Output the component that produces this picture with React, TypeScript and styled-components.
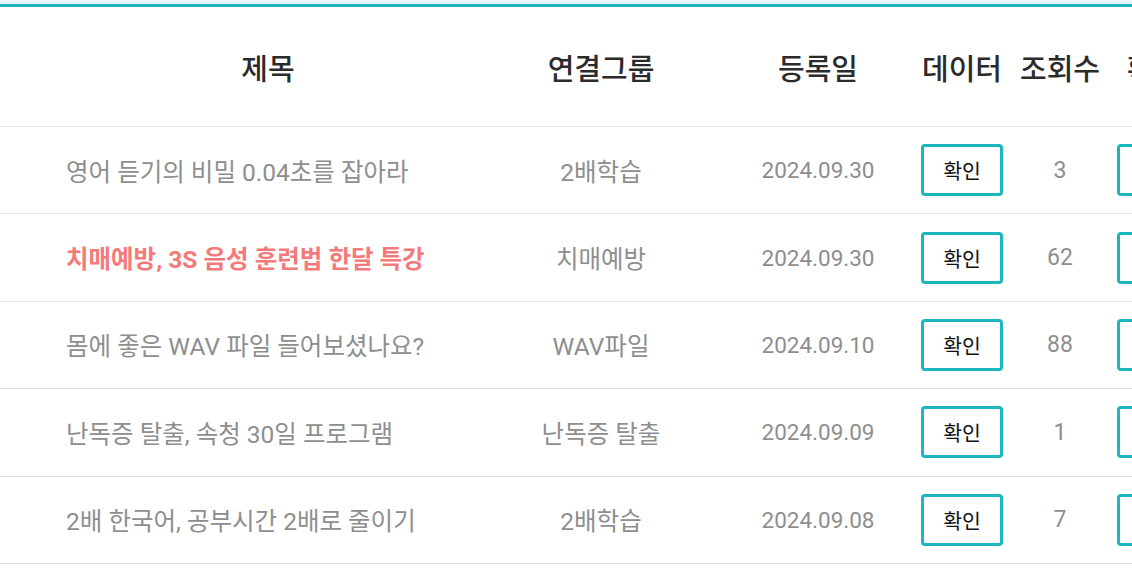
import styled, { createGlobalStyle } from "styled-components";

interface PostType {
  id: number;
  title: string;
  group: string;
  date: string;
  views: number;
  highlight?: boolean;
}

const posts: PostType[] = [
  { id: 1, title: "영어 듣기의 비밀 0.04초를 잡아라", group: "2배학습", date: "2024.09.30", views: 3 },
  { id: 2, title: "치매예방, 3S 음성 훈련법 한달 특강", group: "치매예방", date: "2024.09.30", views: 62, highlight: true },
  { id: 3, title: "몸에 좋은 WAV 파일 들어보셨나요?", group: "WAV파일", date: "2024.09.10", views: 88 },
  { id: 4, title: "난독증 탈출, 속청 30일 프로그램", group: "난독증 탈출", date: "2024.09.09", views: 1 },
  { id: 5, title: "2배 한국어, 공부시간 2배로 줄이기", group: "2배학습", date: "2024.09.08", views: 7 },
];

const GlobalStyle = createGlobalStyle`
  body {
    margin: 0;
    background: #fff;
    overflow: hidden;
    font-family: Roboto, "Noto Sans CJK KR", sans-serif;
  }
`;

const Page = styled.div`
  width: 1132px;
  height: 588px;
  overflow: hidden;
  border-top: 4px solid #e3f7f8;
`;

const Table = styled.div`
  width: 1207px;
  border-top: 3px solid #1db5bd;
`;

const Row = styled.div<{ $head?: boolean }>`
  display: grid;
  grid-template-columns: 479px 244px 190px 98px 98px 98px;
  align-items: center;
  height: ${(p) => (p.$head ? "120px" : "87.4px")};
  border-bottom: 1px solid #e2e2e2;
  box-sizing: border-box;
`;

const HeadCell = styled.div<{ $indent?: number }>`
  text-align: center;
  padding-left: ${(p) => p.$indent ?? 0}px;
  font-size: 29px;
  font-weight: 500;
  color: #2b2b2b;
  white-space: nowrap;
`;

const TitleCell = styled.div<{ $highlight?: boolean }>`
  padding-left: 66px;
  font-size: 24.5px;
  font-weight: ${(p) => (p.$highlight ? 700 : 400)};
  color: ${(p) => (p.$highlight ? "#f47a7a" : "#8e8e8e")};
  white-space: nowrap;
`;

const Cell = styled.div<{ $size?: number }>`
  text-align: center;
  font-size: ${(p) => p.$size ?? 24.5}px;
  color: #8e8e8e;
  white-space: nowrap;
`;

const ButtonCell = styled.div`
  display: flex;
  justify-content: center;
`;

const CheckButton = styled.button`
  width: 82px;
  height: 52px;
  box-sizing: border-box;
  border: 3px solid #1cb6be;
  border-radius: 4px;
  background: #fff;
  font-family: Roboto, "Noto Sans CJK KR", sans-serif;
  font-size: 20.5px;
  color: #111;
  padding: 0;
`;

export default function App() {
  return (
    <Page>
      <GlobalStyle />
      <Table>
        <Row $head>
          <HeadCell $indent={57}>제목</HeadCell>
          <HeadCell>연결그룹</HeadCell>
          <HeadCell>등록일</HeadCell>
          <HeadCell>데이터</HeadCell>
          <HeadCell>조회수</HeadCell>
          <HeadCell $indent={18}>확인서</HeadCell>
        </Row>
        {posts.map((post) => (
          <Row key={post.id}>
            <TitleCell $highlight={post.highlight}>{post.title}</TitleCell>
            <Cell>{post.group}</Cell>
            <Cell $size={22.5}>{post.date}</Cell>
            <ButtonCell>
              <CheckButton>확인</CheckButton>
            </ButtonCell>
            <Cell $size={23}>{post.views}</Cell>
            <ButtonCell>
              <CheckButton>확인</CheckButton>
            </ButtonCell>
          </Row>
        ))}
      </Table>
    </Page>
  );
}
